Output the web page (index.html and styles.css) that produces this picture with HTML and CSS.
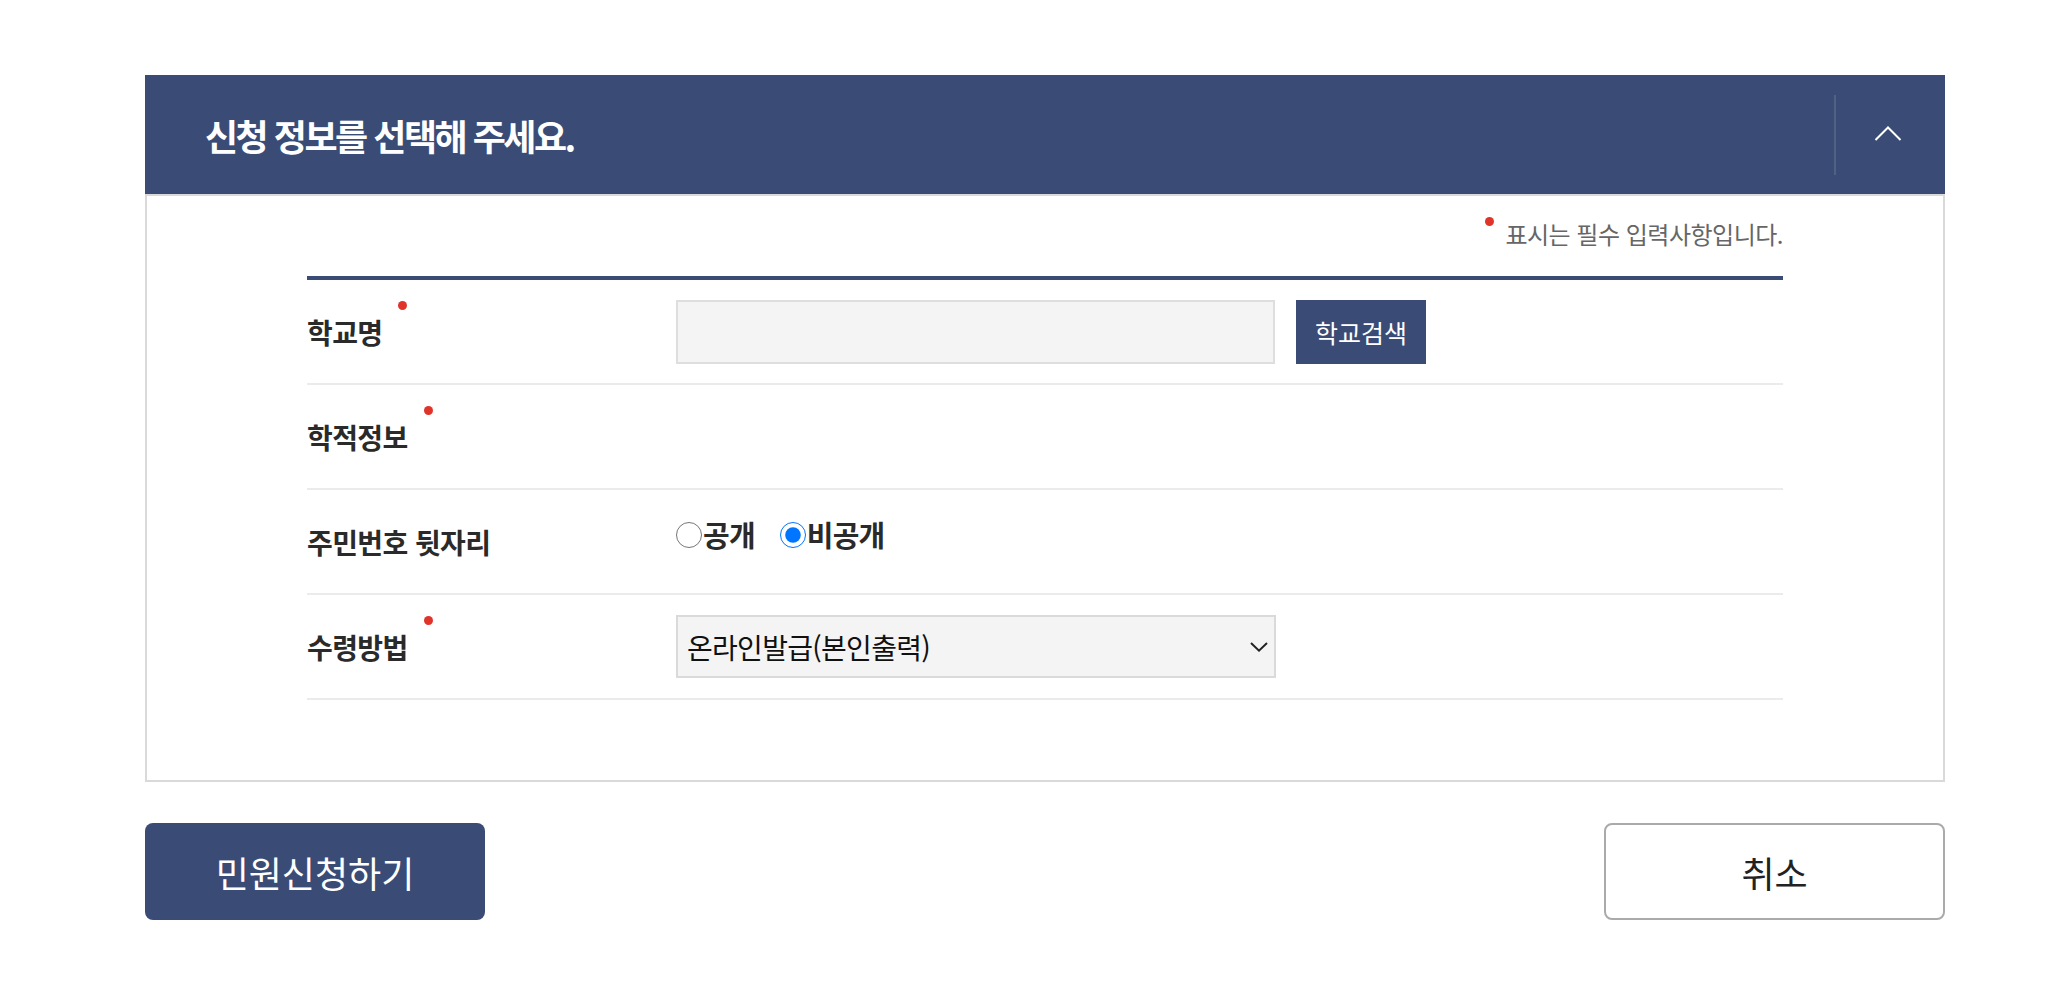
FILE: index.html
```html
<!DOCTYPE html>
<html lang="ko">
<head>
<meta charset="utf-8">
<title>신청 정보</title>
<link rel="stylesheet" href="styles.css">
</head>
<body>
<div class="wrap">
  <section class="panel">
    <div class="panel-head">
      <h2 class="panel-title">신청 정보를 선택해 주세요.</h2>
      <button class="toggle" type="button" aria-label="접기">
        <svg width="28" height="16" viewBox="0 0 28 16"><path d="M1.5 15 L14 2.5 L26.5 15" fill="none" stroke="#fff" stroke-width="2"/></svg>
      </button>
    </div>
    <div class="panel-body">
      <p class="note"><span class="note-text">표시는 필수 입력사항입니다.</span></p>
      <div class="form-table">
        <div class="row">
          <div class="label"><span class="req">학교명</span></div>
          <div class="field">
            <input class="text-input" type="text">
            <button class="btn-search" type="button">학교검색</button>
          </div>
        </div>
        <div class="row">
          <div class="label"><span class="req">학적정보</span></div>
          <div class="field"></div>
        </div>
        <div class="row">
          <div class="label"><span class="plain">주민번호 뒷자리</span></div>
          <div class="field radio-group">
            <label class="radio"><input type="radio" name="rrn">공개</label>
            <label class="radio"><input type="radio" name="rrn" checked>비공개</label>
          </div>
        </div>
        <div class="row">
          <div class="label"><span class="req">수령방법</span></div>
          <div class="field">
            <div class="select-wrap">
              <select class="select">
                <option>온라인발급(본인출력)</option>
              </select>
              <svg class="select-arrow" width="18" height="10" viewBox="0 0 18 10"><path d="M1 1 L9 8.6 L17 1" fill="none" stroke="#222" stroke-width="2"/></svg>
            </div>
          </div>
        </div>
      </div>
    </div>
  </section>
  <div class="actions">
    <button class="btn-primary" type="button">민원신청하기</button>
    <button class="btn-cancel" type="button">취소</button>
  </div>
</div>
</body>
</html>
```
FILE: styles.css
```css
* { box-sizing: border-box; }

body {
  margin: 0;
  background: #fff;
  color: #222;
  font-family: "Noto Sans CJK KR", "Noto Sans", sans-serif;
}

.wrap {
  width: 1800px;
  margin-left: 145px;
  padding-top: 75px;
}

.panel-head {
  height: 119px;
  background: #3a4c76;
  display: flex;
  align-items: center;
  justify-content: space-between;
}

.panel-title {
  margin: 0;
  padding-left: 60px;
  font-size: 36px;
  font-weight: 700;
  letter-spacing: -2.5px;
  line-height: 1;
  color: #fff;
}

.toggle {
  width: 111px;
  height: 80px;
  padding: 0 6px 4px 0;
  border: 0;
  border-left: 2px solid rgba(255, 255, 255, 0.12);
  background: transparent;
  display: flex;
  align-items: center;
  justify-content: center;
}

.panel-body {
  border: 2px solid #d9d9d9;
  padding: 0 160px 80px;
}

.note {
  margin: 0;
  height: 80px;
  padding-bottom: 4px;
  display: flex;
  justify-content: flex-end;
  align-items: center;
}

.note-text {
  position: relative;
  display: inline-block;
  font-size: 24px;
  line-height: 1;
  letter-spacing: -0.5px;
  color: #666;
}

.note-text::before {
  content: "";
  position: absolute;
  left: -20px;
  top: -5px;
  width: 9px;
  height: 9px;
  border-radius: 50%;
  background: #e0342b;
}

.form-table {
  border-top: 4px solid #3a4c76;
}

.row {
  display: grid;
  grid-template-columns: 369px 1fr;
  align-items: center;
  height: 105px;
  border-bottom: 2px solid #ebebeb;
}

.label {
  font-size: 28px;
  font-weight: 700;
  letter-spacing: -0.6px;
  line-height: 1;
  color: #2a2a2a;
}

.req,
.plain {
  position: relative;
  display: inline-block;
  line-height: 1;
}

.req::after {
  content: "";
  position: absolute;
  left: calc(100% + 16px);
  top: -17px;
  width: 9px;
  height: 9px;
  border-radius: 50%;
  background: #e0342b;
}

.field {
  display: flex;
  align-items: center;
}

.text-input {
  width: 599px;
  height: 64px;
  margin: 0;
  background: #f4f4f4;
  border: 2px solid #dedede;
  font-family: inherit;
}

.btn-search {
  margin-left: 21px;
  width: 130px;
  height: 64px;
  border: 0;
  background: #3a4c76;
  color: #fff;
  font-family: inherit;
  font-size: 25px;
  letter-spacing: 0;
}

.radio-group {
  gap: 25px;
  padding-bottom: 14px;
}

.radio {
  display: flex;
  align-items: center;
  font-size: 29px;
  font-weight: 700;
  letter-spacing: -0.8px;
  line-height: 1;
  color: #2a2a2a;
}

.radio input {
  width: 26px;
  height: 26px;
  margin: 0 1px 0 0;
}

.select-wrap {
  position: relative;
  width: 600px;
  height: 63px;
}

.select {
  appearance: none;
  -webkit-appearance: none;
  width: 100%;
  height: 100%;
  margin: 0;
  padding: 0 40px 0 9px;
  background: #f4f4f4;
  border: 2px solid #dadada;
  border-radius: 0;
  font-family: inherit;
  font-size: 28px;
  letter-spacing: -0.7px;
  color: #111;
}

.select-arrow {
  position: absolute;
  right: 8px;
  top: 27px;
  pointer-events: none;
}

.actions {
  margin-top: 41px;
  display: flex;
  justify-content: space-between;
}

.btn-primary,
.btn-cancel {
  width: 340px;
  height: 97px;
  border-radius: 8px;
  font-family: inherit;
  font-size: 36px;
  letter-spacing: 0;
}

.btn-primary {
  border: 0;
  background: #3a4c76;
  color: #fff;
}

.btn-cancel {
  width: 341px;
  border: 2px solid #aaa;
  background: #fff;
  color: #222;
}
```
